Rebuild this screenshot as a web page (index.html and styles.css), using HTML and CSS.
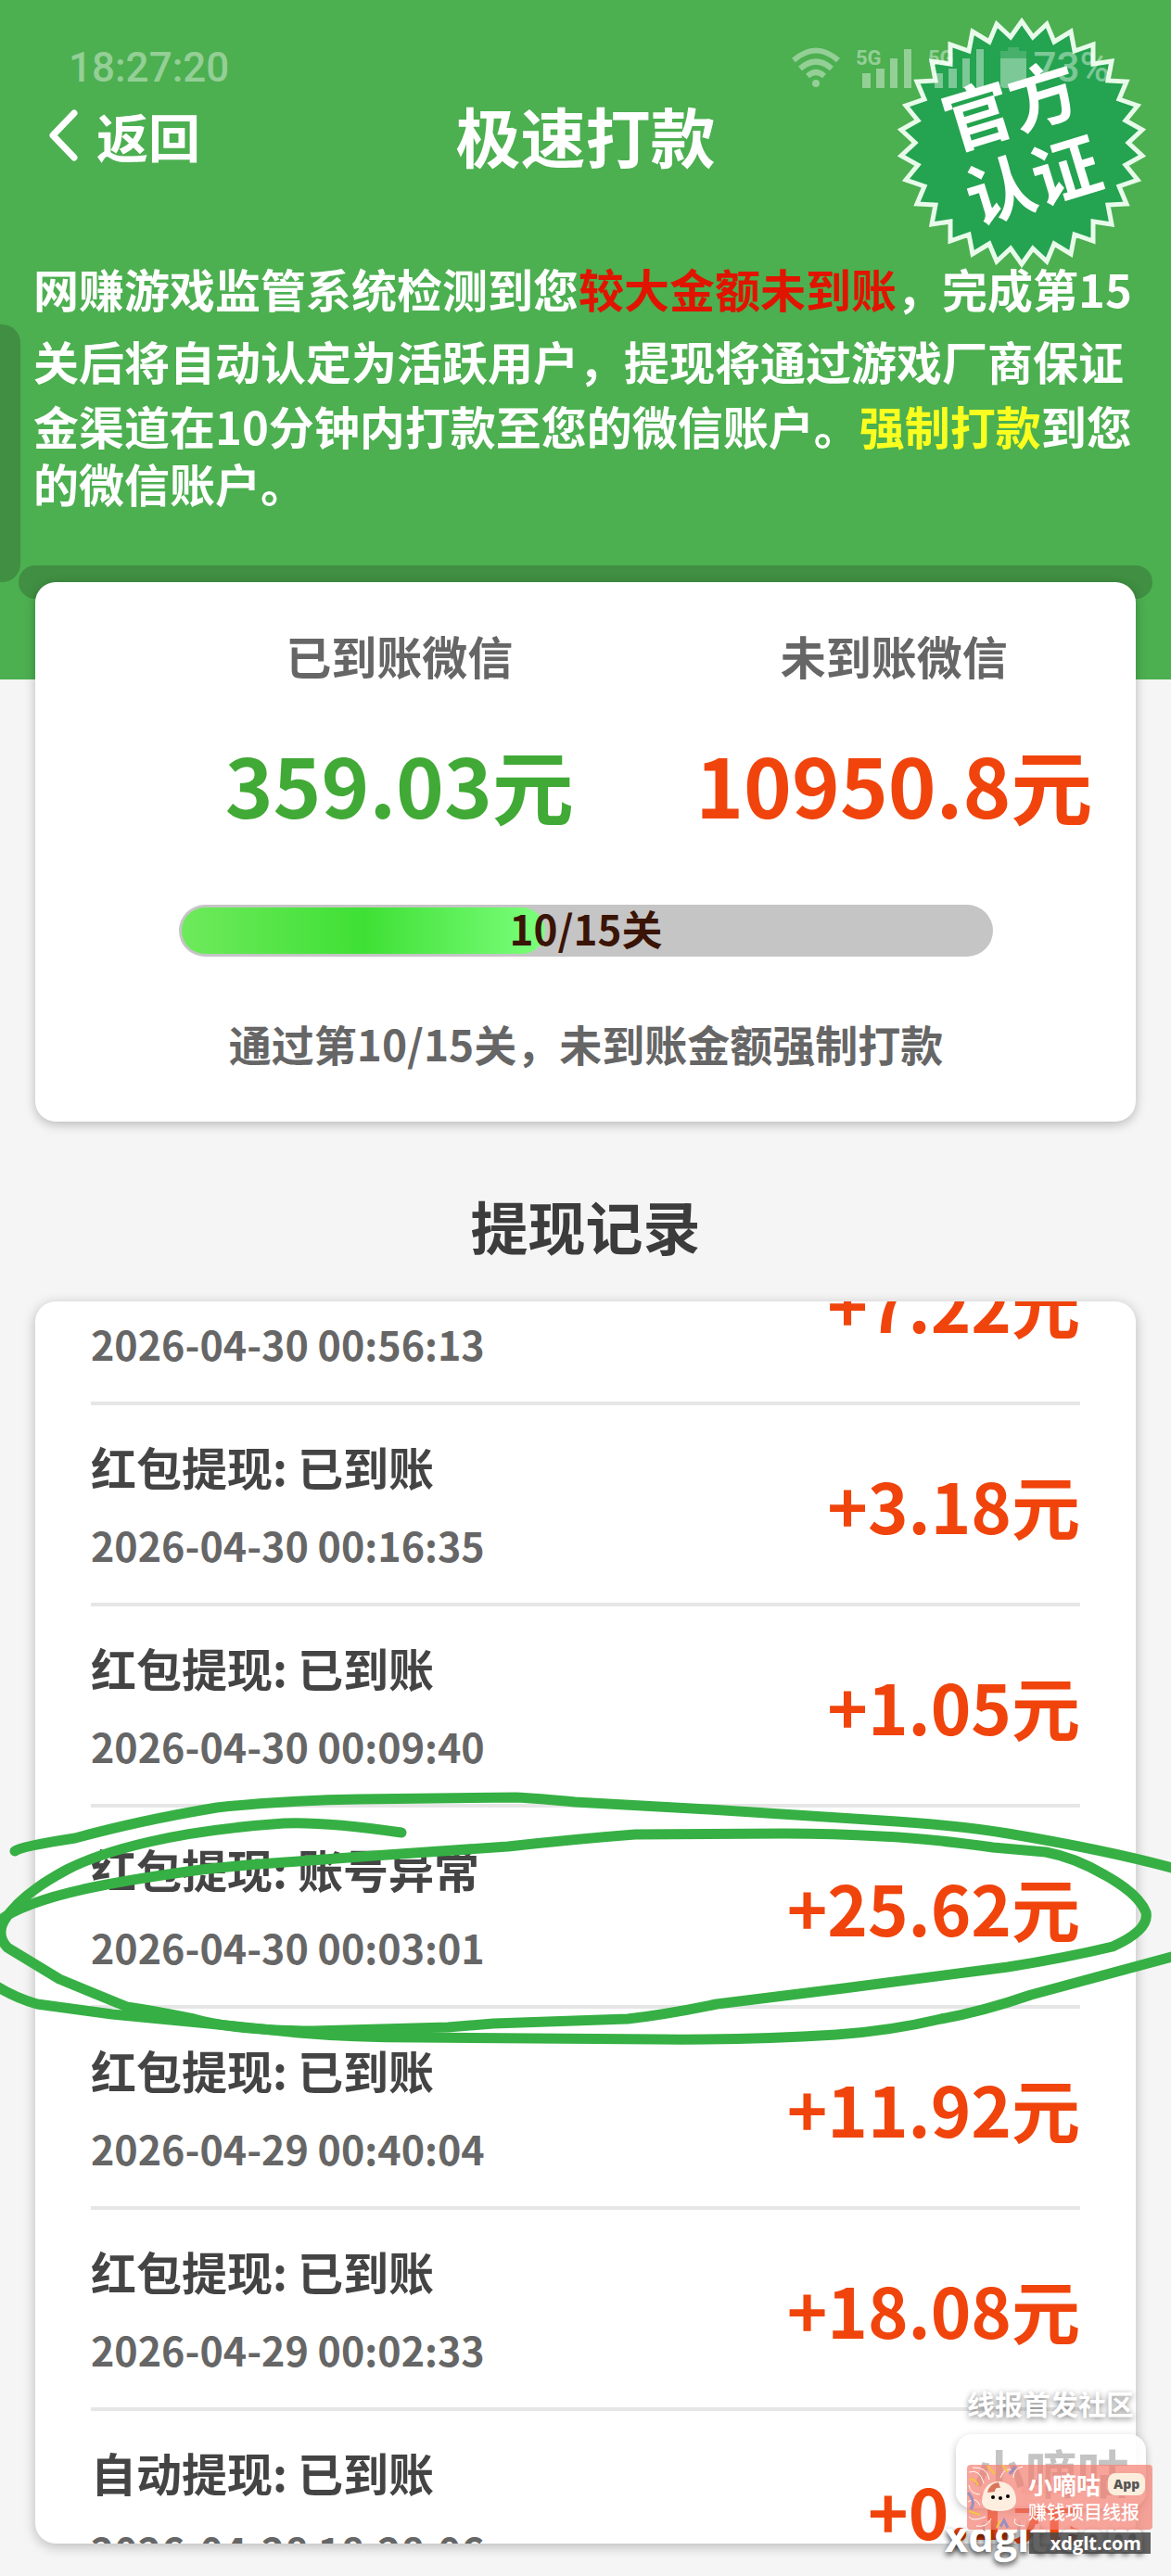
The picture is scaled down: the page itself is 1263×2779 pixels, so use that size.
FILE: index.html
```html
<!DOCTYPE html>
<html lang="zh-CN">
<head>
    <meta charset="UTF-8">
    <meta name="viewport" content="width=device-width, initial-scale=1.0">
    <title>极速打款</title>
    <link rel="stylesheet" href="styles.css">
</head>
<body>

    <header class="header">
        <div class="status-bar">
            <span class="time">18:27:20</span>
            <div class="status-icons">
                <svg class="wifi" width="54" height="44" viewBox="0 0 54 44">
                    <path d="M3 14 Q27 -7 51 14" />
                    <path d="M10 23 Q27 8 44 23" />
                    <path d="M18 31 Q27 23 36 31" />
                    <circle cx="27" cy="39" r="4" />
                </svg>
                <svg class="signal" width="62" height="44" viewBox="0 0 62 44">
                    <text x="0" y="19">5G</text>
                    <path d="M7 28h9v16H7zM22 23h9v21h-9zM37 12h8v32h-8zM52 2h8v42h-8z" />
                </svg>
                <svg class="signal" width="62" height="44" viewBox="0 0 62 44">
                    <text x="0" y="19">5G</text>
                    <path d="M7 28h9v16H7zM22 23h9v21h-9zM37 12h8v32h-8zM52 2h8v42h-8z" />
                </svg>
                <svg class="battery" width="28" height="44" viewBox="0 0 28 44">
                    <path class="level" d="M8 0h12v4h8v8H0V4h8z" />
                    <path d="M0 12h28v28q0 4-4 4H4q-4 0-4-4z" />
                </svg>
                <span>73%</span>
            </div>
        </div>

        <nav class="title-bar">
            <a class="back" href="#">
                <svg width="32" height="56" viewBox="0 0 32 56">
                    <path d="M28 4 L5 28 L28 52" />
                </svg>
                返回
            </a>
            <h1>极速打款</h1>
        </nav>

        <svg class="badge" viewBox="-140 -140 280 280">
            <polygon points="0,-131 12,-114 27,-128 35,-109 53,-120 57,-99 77,-106 77,-85 97,-88 93,-67 113,-66 105,-47 125,-40 112,-24 130,-14 115,0 130,14 112,24 125,40 105,47 113,66 93,67 97,88 77,85 77,106 57,99 53,120 35,109 27,128 12,114 0,131 -12,114 -27,128 -35,109 -53,120 -57,99 -77,106 -77,85 -97,88 -93,67 -113,66 -105,47 -125,40 -112,24 -130,14 -115,0 -130,-14 -112,-24 -125,-40 -105,-47 -113,-66 -93,-67 -97,-88 -77,-85 -77,-106 -57,-99 -53,-120 -35,-109 -27,-128 -12,-114" />
            <g transform="rotate(-17)">
                <text x="0" y="-14">官方</text>
                <text x="0" y="70">认证</text>
            </g>
        </svg>

        <p class="notice">
            <span class="loose">网赚游戏监管系统检测到您<em class="red">较大金额未到账</em>，完成第15</span>
            <span class="loose">关后将自动认定为活跃用户，提现将通过游戏厂商保证</span>
            <span>金渠道在10分钟内打款至您的微信账户。<em class="yellow">强制打款</em>到您</span>
            <span>的微信账户。</span>
        </p>
        <div class="side-tab"></div>
    </header>

    <section class="summary">
        <div class="card">
            <div class="totals">
                <div class="total">
                    <h2>已到账微信</h2>
                    <p class="paid">359.03元</p>
                </div>
                <div class="total">
                    <h2>未到账微信</h2>
                    <p class="unpaid">10950.8元</p>
                </div>
            </div>
            <div class="progress" role="progressbar" aria-valuenow="10" aria-valuemin="0" aria-valuemax="15">
                <div class="progress-fill" style="width: 45%"></div>
                <span class="progress-text">10/15关</span>
            </div>
            <p class="hint">通过第10/15关，未到账金额强制打款</p>
        </div>
    </section>

    <h2 class="records-title">提现记录</h2>

    <section class="records">
        <ul class="record-list">
            <li>
                <div class="info"><time>2026-04-30 00:56:13</time></div>
                <span class="amount">+7.22元</span>
            </li>
            <li>
                <div class="info"><h3>红包提现: 已到账</h3><time>2026-04-30 00:16:35</time></div>
                <span class="amount">+3.18元</span>
            </li>
            <li>
                <div class="info"><h3>红包提现: 已到账</h3><time>2026-04-30 00:09:40</time></div>
                <span class="amount">+1.05元</span>
            </li>
            <li>
                <div class="info"><h3>红包提现: 账号异常</h3><time>2026-04-30 00:03:01</time></div>
                <span class="amount">+25.62元</span>
            </li>
            <li>
                <div class="info"><h3>红包提现: 已到账</h3><time>2026-04-29 00:40:04</time></div>
                <span class="amount">+11.92元</span>
            </li>
            <li>
                <div class="info"><h3>红包提现: 已到账</h3><time>2026-04-29 00:02:33</time></div>
                <span class="amount">+18.08元</span>
            </li>
            <li>
                <div class="info"><h3>自动提现: 已到账</h3><time>2026-04-28 18:28:06</time></div>
                <span class="amount">+0.1元</span>
            </li>
        </ul>

        <!-- hand drawn circle round the abnormal record -->
        <svg class="marker" viewBox="0 0 1263 340" preserveAspectRatio="none">
            <path d="M16 97 Q22 92 81 83 Q150 64 234 50 Q310 42 387 41 L556 39 Q580 40 620 44 L765 52 L967 65 Q1040 70 1087 78 Q1200 97 1275 118" />
            <path d="M1275 208 L1112 252 Q1060 270 1015 278 Q960 291 902 295 Q800 301 709 300 L451 298 Q380 298 322 293 L225 283 L121 273 L40 262 Q15 255 -8 240" />
            <path d="M433 77 Q350 65 306 67 Q220 73 161 87 Q105 100 72 117 Q20 145 4 173 Q-4 188 8 201 L64 235 Q100 250 137 265 Q170 270 209 278 Q250 290 338 291 L483 287 L532 283 L677 278 Q720 273 773 262 L910 245 L1087 222 Q1150 212 1200 200 Q1240 182 1236 163 Q1228 143 1192 123 Q1160 104 1128 98 L1071 93 Q1000 83 950 81 Q900 78 846 78 L685 79 Q620 84 548 92 L403 102 L322 108 Q260 112 217 117 Q150 126 105 135 Q60 144 32 155 Q10 163 0 172" />
        </svg>
    </section>

    <aside class="watermark">
        <p class="wm-top">线报首发社区</p>
        <div class="wm-box">小嘀咕</div>
        <p class="wm-site">xdglt.com</p>
        <div class="wm-card">
            <svg width="66" height="70" viewBox="0 0 66 70">
                <path class="ray-white" d="M2 8 Q14 4 18 20 M6 3 Q22 2 24 16 M2 22 Q4 32 14 32 M1 40 Q10 34 14 44 M2 56 Q6 62 20 56 M10 66 Q22 68 26 58 M52 58 Q48 66 62 66 M36 14 Q40 2 50 6 M50 14 Q50 4 60 2" />
                <path class="ray-yellow" d="M3 16 Q8 14 12 22 M22 1 L30 10 M38 0 L44 8 M2 50 L14 54 M32 68 L36 60" />
                <path class="ray-blue" d="M1 30 Q10 40 4 48 M46 10 L52 2 M36 67 L40 60 L44 68" />
                <path class="face" d="M16 40 Q17 18 35 18 Q52 20 53 38 Q53 50 35 50 Q17 50 16 40z" />
                <path class="hair" d="M22 30 Q24 20 34 19 L36 25 Q30 24 30 29z" />
                <circle cx="28" cy="35" r="2" />
                <circle cx="44" cy="34" r="2" />
                <circle cx="36" cy="36" r="2" />
            </svg>
            <div>
                <p class="wm-name">小嘀咕 <b>App</b></p>
                <p class="wm-desc">赚钱项目线报</p>
            </div>
        </div>
        <p class="wm-label">xdglt.com</p>
    </aside>

</body>
</html>
```
FILE: styles.css
```css
* {
    box-sizing: border-box;
    margin: 0;
    padding: 0;
}

body {
    position: relative;
    display: flex;
    flex-direction: column;
    height: 100vh;
    overflow: hidden;
    background-color: #f5f5f5;
    font-family: "Noto Sans CJK SC", sans-serif;
    font-weight: bold;
    color: #444;
}

.header {
    position: relative;
    height: 733px;
    flex-shrink: 0;
    background-color: #4caf50;
    color: white;
}

/* status bar */
.status-bar {
    position: relative;
    z-index: 2;
    display: flex;
    justify-content: space-between;
    align-items: center;
    padding: 46px 66px 0 74px;
    height: 100px;
    font-family: Roboto, sans-serif;
    font-size: 44px;
    font-weight: 500;
    line-height: 60px;
    opacity: 0.4;
}

.status-icons {
    display: flex;
    align-items: center;
    gap: 16px;
}

.status-icons svg {
    fill: white;
}

.wifi path {
    fill: none;
    stroke: white;
    stroke-width: 6;
}

.signal text {
    font-size: 22px;
    font-weight: bold;
}

.battery {
    margin-right: -8px;
}

.battery .level {
    opacity: 0.4;
}

.title-bar {
    display: grid;
    grid-template-columns: 1fr auto 1fr;
    align-items: center;
    height: 92px;
    padding: 0 52px;
}

.title-bar h1 {
    font-size: 70px;
    line-height: 92px;
}

.back {
    display: flex;
    align-items: center;
    gap: 20px;
    color: white;
    font-size: 56px;
    line-height: 92px;
    text-decoration: none;
}

.back path {
    fill: none;
    stroke: white;
    stroke-width: 7;
    stroke-linecap: round;
    stroke-linejoin: round;
}

.badge {
    position: absolute;
    top: 14px;
    right: 21px;
    width: 280px;
    height: 280px;
    z-index: 1;
}

.badge polygon {
    fill: #24a350;
    stroke: #e8fbea;
    stroke-width: 5;
}

.badge text {
    fill: white;
    font-size: 74px;
    text-anchor: middle;
}

.notice {
    padding: 80px 36px 0;
    font-size: 49px;
    line-height: 62px;
    white-space: nowrap;
}

.notice span {
    display: block;
}

.notice .loose {
    line-height: 78px;
}

.notice em {
    font-style: normal;
}

.red {
    color: #e01400;
}

.yellow {
    color: #fbff1f;
}

.side-tab {
    position: absolute;
    left: 0;
    top: 350px;
    width: 22px;
    height: 278px;
    border-radius: 0 20px 20px 0;
    background-color: #408f42;
}

/* summary card */
.summary {
    position: relative;
    margin: -123px 20px 0;
    padding: 18px 18px 0;
}

.summary::before {
    content: "";
    position: absolute;
    top: 0;
    left: 0;
    right: 0;
    height: 36px;
    border-radius: 18px;
    background-color: #408f42;
}

.card {
    position: relative;
    padding: 46px 56px 52px 188px;
    background-color: white;
    border-radius: 22px;
    box-shadow: 0 3px 12px rgba(0, 0, 0, 0.25);
}

.totals {
    display: grid;
    grid-template-columns: minmax(0, 1fr) minmax(0, 1fr);
    gap: 124px;
}

.total {
    display: flex;
    flex-direction: column;
    align-items: center;
    white-space: nowrap;
}

.total h2 {
    font-size: 49px;
    line-height: 66px;
    color: #666;
}

.total p {
    margin-top: 50px;
    font-size: 88px;
    line-height: 110px;
}

.total .paid {
    color: #41a936;
}

.total .unpaid {
    color: #f0440c;
}

.progress {
    position: relative;
    height: 56px;
    margin: 76px 98px 0 -33px;
    padding: 3px;
    border-radius: 28px;
    background-color: #c5c5c5;
}

.progress-fill {
    height: 50px;
    border-radius: 25px;
    background: linear-gradient(to right, #6eea5c, #3fe035 50%, #7cff7c);
}

.progress-text {
    position: absolute;
    inset: 0;
    font-size: 44px;
    line-height: 50px;
    text-align: center;
    color: #3a1405;
}

.hint {
    margin: 60px 98px 0 -33px;
    font-size: 46px;
    line-height: 66px;
    text-align: center;
    white-space: nowrap;
    color: #666;
}

/* records */
.records-title {
    padding: 68px 0 38px;
    font-size: 62px;
    line-height: 88px;
    text-align: center;
    color: #3c3c3c;
}

.records {
    position: relative;
    flex: 1;
    min-height: 0;
    padding: 0 38px 35px;
}

.record-list {
    display: flex;
    flex-direction: column;
    height: 100%;
    overflow: hidden;
    padding: 0 60px;
    list-style: none;
    background-color: white;
    border-radius: 22px;
    box-shadow: 0 3px 14px rgba(0, 0, 0, 0.25);
}

.record-list li {
    display: flex;
    flex-shrink: 0;
    justify-content: space-between;
    align-items: center;
    height: 217px;
    border-bottom: 4px solid #e6e6e6;
}

/* list is scrolled down a little */
.record-list li:first-child {
    margin-top: -105px;
}

.info {
    display: flex;
    flex-direction: column;
    justify-content: flex-end;
    height: 146px;
}

.info h3 {
    margin-bottom: 22px;
    font-size: 49px;
    line-height: 64px;
}

.info time {
    display: block;
    font-size: 43px;
    line-height: 60px;
    color: #666;
}

.amount {
    font-size: 74px;
    line-height: 100px;
    color: #f0440c;
}

.marker {
    position: absolute;
    left: 0;
    top: 496px;
    width: 100%;
    height: 340px;
    pointer-events: none;
}

.marker path {
    fill: none;
    stroke: #36b044;
    stroke-width: 11;
    stroke-linecap: round;
    stroke-linejoin: round;
}

/* watermark in the corner */
.watermark {
    position: absolute;
    right: 20px;
    bottom: 15px;
    width: 232px;
    height: 194px;
    color: white;
}

.wm-top {
    padding-right: 20px;
    font-size: 30px;
    line-height: 44px;
    text-align: right;
    text-shadow: 0 2px 6px rgba(0, 0, 0, 0.5);
}

.wm-box {
    height: 80px;
    margin: 12px 7px 0 20px;
    border-radius: 18px;
    background-color: rgba(255, 255, 255, 0.9);
    box-shadow: 0 3px 8px rgba(0, 0, 0, 0.25);
    font-size: 56px;
    line-height: 80px;
    text-align: center;
    color: #c4c4c4;
}

.wm-site {
    margin-top: 8px;
    font-family: "Open Sans", sans-serif;
    font-size: 44px;
    line-height: 44px;
    text-align: center;
    text-shadow: 0 3px 6px rgba(0, 0, 0, 0.8);
}

.wm-card {
    position: absolute;
    right: 0;
    top: 89px;
    display: flex;
    width: 200px;
    height: 70px;
    border-radius: 4px;
    background-color: rgba(243, 125, 112, 0.7);
    white-space: nowrap;
}

.wm-name {
    display: flex;
    align-items: center;
    gap: 8px;
    margin-top: 5px;
    font-size: 26px;
    line-height: 32px;
}

.wm-name b {
    padding: 0 6px;
    border-radius: 8px;
    background-color: #fbeedd;
    font-family: "Open Sans", sans-serif;
    font-size: 14px;
    line-height: 24px;
    color: #555;
}

.wm-desc {
    font-size: 20px;
    font-weight: 500;
    line-height: 28px;
}

.wm-label {
    position: absolute;
    right: 2px;
    top: 162px;
    width: 131px;
    padding-right: 10px;
    background-color: rgba(70, 70, 70, 0.85);
    font-family: "Open Sans", sans-serif;
    font-size: 20px;
    line-height: 23px;
    text-align: right;
}

.ray-white,
.ray-yellow,
.ray-blue {
    fill: none;
    stroke: white;
    stroke-width: 1;
}

.ray-yellow {
    stroke: #f5c542;
    stroke-width: 2;
}

.ray-blue {
    stroke: #9a8fc0;
    stroke-width: 3;
}

.face {
    fill: #fdeee0;
}

.hair {
    fill: #d9755c;
}
```
